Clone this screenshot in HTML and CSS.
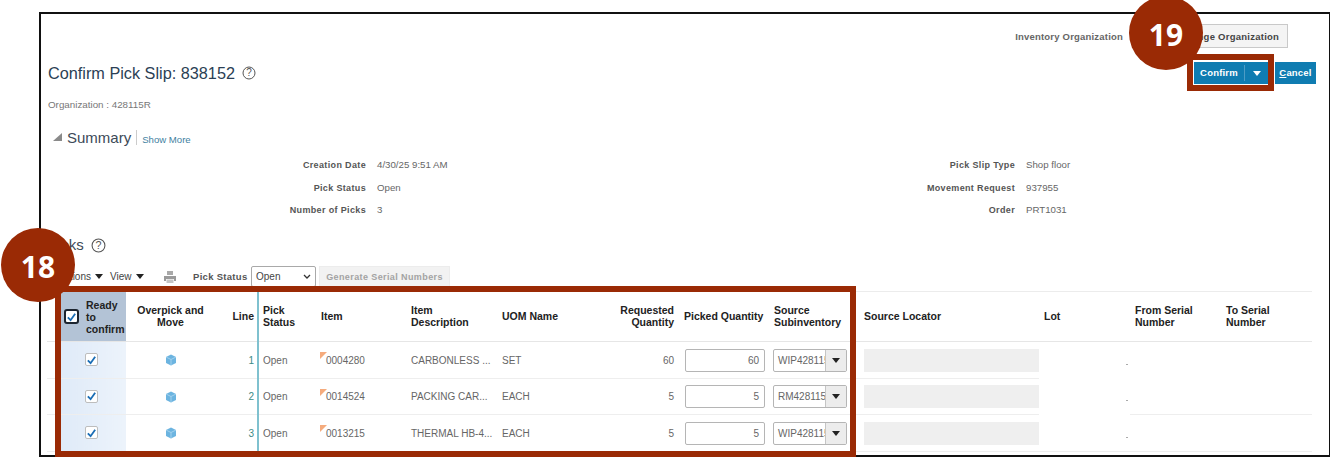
FILE: index.html
```html
<!DOCTYPE html>
<html lang="en">
<head>
<meta charset="utf-8">
<title>Confirm Pick Slip</title>
<link rel="stylesheet" href="styles.css">
</head>
<body>
<main class="frame">
  <div class="org-bar">
    <span class="org-label">Inventory Organization</span>
    <button class="btn-plain">Change Organization</button>
  </div>
  <div class="title-row">
    <h1 class="page-title">Confirm Pick Slip: 838152
      <svg class="help" viewBox="0 0 14 14" width="14" height="14"><circle cx="7" cy="7" r="6" fill="none" stroke="#555" stroke-width="1"/><text x="7" y="10.2" text-anchor="middle" class="help-q">?</text></svg>
    </h1>
    <div class="actions">
      <div class="btn-split"><span class="btn-main">Confirm</span><span class="btn-caret"></span></div>
      <div class="btn-cancel"><u>C</u>ancel</div>
    </div>
  </div>
  <div class="org-line">Organization : 428115R</div>
  <div class="summary-head">
    <span class="disclosure"></span>
    <h2 class="section-title">Summary</h2>
    <a class="show-more">Show More</a>
  </div>
  <div class="form">
    <div class="form-col form-left">
      <div class="form-row"><span class="lbl">Creation Date</span><span class="val">4/30/25 9:51 AM</span></div>
      <div class="form-row"><span class="lbl">Pick Status</span><span class="val">Open</span></div>
      <div class="form-row"><span class="lbl">Number of Picks</span><span class="val">3</span></div>
    </div>
    <div class="form-col form-right">
      <div class="form-row"><span class="lbl">Pick Slip Type</span><span class="val">Shop floor</span></div>
      <div class="form-row"><span class="lbl">Movement Request</span><span class="val">937955</span></div>
      <div class="form-row"><span class="lbl">Order</span><span class="val">PRT1031</span></div>
    </div>
  </div>
  <h2 class="section-title picks-title">Picks
    <svg class="help" viewBox="0 0 14 14" width="15" height="15"><circle cx="7" cy="7" r="6" fill="none" stroke="#555" stroke-width="1"/><text x="7" y="10.2" text-anchor="middle" class="help-q">?</text></svg>
  </h2>
  <div class="toolbar">
    <span class="menu">Actions <i class="tri"></i></span>
    <span class="menu menu-view">View <i class="tri"></i></span>
    <svg class="print" viewBox="0 0 14 14" width="14" height="14"><path d="M4 1h6v4H4z" fill="#a9a9a9"/><path d="M1 6h12v5h-2V9H3v2H1z" fill="#9a9a9a"/><path d="M3.500 9.500h7V13h-7z" fill="#c4c4c4"/></svg>
    <span class="filter-label">Pick Status</span>
    <span class="filter-select">Open<svg viewBox="0 0 8 5" width="8" height="5"><path d="M1 1l3 3 3-3" fill="none" stroke="#333" stroke-width="1.300"/></svg></span>
    <span class="btn-disabled">Generate Serial Numbers</span>
  </div>
  <table class="grid">
    <colgroup>
      <col class="c-sp"><col class="c-ready"><col class="c-over"><col class="c-line"><col class="c-status"><col class="c-item"><col class="c-desc"><col class="c-uom"><col class="c-req"><col class="c-pick"><col class="c-sub"><col class="c-loc"><col class="c-lot"><col class="c-from"><col class="c-to">
    </colgroup>
    <thead>
      <tr>
        <th></th>
        <th class="th-ready"><span class="ready-wrap"><span class="chk chk-head"><svg viewBox="0 0 12 12" width="12" height="12"><path d="M2 6.500l3 3 5-7" fill="none" stroke="#1a6db5" stroke-width="2"/></svg></span><span>Ready to confirm</span></span></th>
        <th class="ctr">Overpick and Move</th>
        <th class="rt line-cell">Line</th>
        <th class="status-cell">Pick Status</th>
        <th>Item</th>
        <th class="th-narrow">Item Description</th>
        <th>UOM Name</th>
        <th class="rt">Requested Quantity</th>
        <th class="th-pick">Picked Quantity</th>
        <th>Source Subinventory</th>
        <th>Source Locator</th>
        <th>Lot</th>
        <th class="th-narrow">From Serial Number</th>
        <th class="th-narrow">To Serial Number</th>
      </tr>
    </thead>
    <tbody>
      <tr>
        <td></td>
        <td class="td-ready"><span class="chk"><svg viewBox="0 0 12 12" width="12" height="12"><path d="M2 6.500l3 3 5-7" fill="none" stroke="#1a6db5" stroke-width="2"/></svg></span></td>
        <td class="ctr"><svg class="cube" viewBox="0 0 12 12" width="12" height="12"><path d="M6 .5l5 2.500v6L6 11.500 1 9V3z" fill="#6cb4e0"/><path d="M1 3l5 2.500L11 3M6 5.500v6" fill="none" stroke="#b9dcf2" stroke-width=".7"/></svg></td>
        <td class="rt line-cell line-num">1</td>
        <td class="status-cell">Open</td>
        <td class="item"><i class="flag"></i>0004280</td>
        <td>CARBONLESS ...</td>
        <td>SET</td>
        <td class="rt">60</td>
        <td><span class="qty">60</span></td>
        <td><span class="combo"><span class="combo-text">WIP428115</span><span class="combo-btn"><i class="tri"></i></span></span></td>
        <td><span class="locator"></span></td>
        <td class="dot-cell no-line"><i class="dot"></i></td>
        <td class="no-line"></td>
        <td class="no-line"></td>
      </tr>
      <tr>
        <td></td>
        <td class="td-ready"><span class="chk"><svg viewBox="0 0 12 12" width="12" height="12"><path d="M2 6.500l3 3 5-7" fill="none" stroke="#1a6db5" stroke-width="2"/></svg></span></td>
        <td class="ctr"><svg class="cube" viewBox="0 0 12 12" width="12" height="12"><path d="M6 .5l5 2.500v6L6 11.500 1 9V3z" fill="#6cb4e0"/><path d="M1 3l5 2.500L11 3M6 5.500v6" fill="none" stroke="#b9dcf2" stroke-width=".7"/></svg></td>
        <td class="rt line-cell line-num">2</td>
        <td class="status-cell">Open</td>
        <td class="item"><i class="flag"></i>0014524</td>
        <td>PACKING CAR...</td>
        <td>EACH</td>
        <td class="rt">5</td>
        <td><span class="qty">5</span></td>
        <td><span class="combo"><span class="combo-text">RM428115</span><span class="combo-btn"><i class="tri"></i></span></span></td>
        <td><span class="locator"></span></td>
        <td class="dot-cell no-line"><i class="dot"></i></td>
        <td></td>
        <td></td>
      </tr>
      <tr>
        <td></td>
        <td class="td-ready"><span class="chk"><svg viewBox="0 0 12 12" width="12" height="12"><path d="M2 6.500l3 3 5-7" fill="none" stroke="#1a6db5" stroke-width="2"/></svg></span></td>
        <td class="ctr"><svg class="cube" viewBox="0 0 12 12" width="12" height="12"><path d="M6 .5l5 2.500v6L6 11.500 1 9V3z" fill="#6cb4e0"/><path d="M1 3l5 2.500L11 3M6 5.500v6" fill="none" stroke="#b9dcf2" stroke-width=".7"/></svg></td>
        <td class="rt line-cell line-num">3</td>
        <td class="status-cell">Open</td>
        <td class="item"><i class="flag"></i>0013215</td>
        <td>THERMAL HB-4...</td>
        <td>EACH</td>
        <td class="rt">5</td>
        <td><span class="qty">5</span></td>
        <td><span class="combo"><span class="combo-text">WIP428115</span><span class="combo-btn"><i class="tri"></i></span></span></td>
        <td><span class="locator"></span></td>
        <td class="dot-cell"><i class="dot"></i></td>
        <td></td>
        <td></td>
      </tr>
    </tbody>
  </table>
</main>
<div class="mark mark-table"></div>
<div class="mark mark-confirm"></div>
<div class="badge badge-18">18</div>
<div class="badge badge-19">19</div>
</body>
</html>
```

FILE: styles.css
```css
* { box-sizing: border-box; }
html, body { margin: 0; padding: 0; height: 457px; overflow: hidden; background: #fff; }
body { position: relative; font-family: "Liberation Sans", Arial, sans-serif; color: #555; font-size: 10px; }

.frame {
  margin: 12px 0 0 39px;
  width: 1291px;
  height: 445px;
  border: 2px solid #111;
  border-right-width: 1px;
  background: #fff;
  overflow: hidden;
}

.org-bar {
  display: flex;
  justify-content: flex-end;
  align-items: center;
  height: 24px;
  margin-top: 10px;
  padding-right: 41px;
}
.org-label { font-weight: bold; font-size: 9.5px; letter-spacing: .2px; color: #666; margin-right: 47px; }
.btn-plain {
  width: 118px;
  height: 24px;
  padding: 0;
  border: 1px solid #c9c9c9;
  background: #f4f4f4;
  font: bold 9.5px "Liberation Sans", Arial, sans-serif;
  letter-spacing: .25px;
  color: #444;
}

.title-row {
  display: flex;
  justify-content: space-between;
  align-items: flex-start;
  height: 37px;
  margin-top: 14px;
  padding: 0 13px 0 7px;
}
.page-title { margin: 1px 0 0; font-weight: normal; font-size: 16.25px; line-height: 20px; color: #2b3f55; display: flex; align-items: center; }
.help { margin-left: 7px; flex: none; }
.help-q { font: 10px "Liberation Sans", Arial, sans-serif; fill: #555; }
.actions { display: flex; gap: 7px; }
.btn-split { display: flex; width: 74px; height: 22px; background: #0f7cb1; color: #fff; font-weight: bold; font-size: 9.5px; letter-spacing: .2px; align-items: center; }
.btn-main { flex: 1; text-align: center; border-right: 1px solid #4d9cc5; line-height: 16px; }
.btn-caret { width: 23px; display: flex; justify-content: center; }
.btn-caret::before { content: ""; border-left: 4px solid transparent; border-right: 4px solid transparent; border-top: 5px solid #fff; }
.btn-cancel { width: 41px; height: 22px; background: #0f7cb1; color: #fff; font-weight: bold; font-size: 9.5px; letter-spacing: .2px; line-height: 22px; text-align: center; }

.org-line { margin: 0 0 0 7px; height: 12px; line-height: 12px; font-size: 9.8px; color: #777; }

.summary-head { display: flex; align-items: center; height: 22px; margin-top: 15px; padding-left: 12px; }
.disclosure { width: 0; height: 0; border-left: 9px solid transparent; border-bottom: 8px solid #8a8a8a; margin-right: 5px; }
.section-title { margin: 0; font-weight: normal; font-size: 15px; color: #3d4a58; }
.show-more { margin-left: 5px; padding-left: 5px; border-left: 1px solid #ccc; font-size: 9.6px; line-height: 15px; color: #3f7f9f; height: 15px; padding-top: 2px; }

.form { display: flex; margin-top: 10px; height: 68px; }
.form-col { display: flex; flex-direction: column; justify-content: flex-start; }
.form-left { width: 649px; }
.form-row { display: flex; height: 23px; line-height: 14px; align-items: flex-start; }
.form-row .lbl { font-weight: bold; font-size: 9px; letter-spacing: .35px; color: #555; text-align: right; }
.form-left .lbl { width: 325px; }
.form-right .lbl { width: 325px; }
.form-row .val { margin-left: 11px; font-size: 9.7px; color: #666; }

.picks-title { margin: 10px 0 0 7px; display: flex; align-items: center; line-height: 18px; height: 18px; }

.toolbar { display: flex; align-items: center; height: 21px; margin-top: 12px; padding-left: 7px; }
.menu { font-size: 10px; color: #444; display: inline-flex; align-items: center; width: 62px; justify-content: flex-end; padding-right: 7px; }
.menu-view { width: 43px; padding-right: 0; justify-content: flex-start; }
.tri { display: inline-block; width: 0; height: 0; border-left: 4px solid transparent; border-right: 4px solid transparent; border-top: 5px solid #222; margin-left: 4px; }
.print { margin-left: 10px; }
.filter-label { margin-left: 16px; font-weight: bold; font-size: 9.5px; letter-spacing: .3px; color: #555; width: 58px; }
.filter-select { display: flex; justify-content: space-between; align-items: center; width: 65px; height: 21px; border: 1px solid #a9a9a9; border-radius: 2px; padding: 0 4px; font-size: 10px; color: #444; }
.btn-disabled { margin-left: 3px; width: 131px; height: 21px; line-height: 20px; text-align: center; background: #f2f2f2; border: 1px solid #ececec; font-weight: bold; font-size: 9px; letter-spacing: .4px; color: #a3a3a3; }

.grid { table-layout: fixed; border-collapse: collapse; width: 1265px; margin: 4px 0 0 6px; border-top: 1px solid #ececec; }
.c-sp { width: 14px; } .c-ready { width: 65px; } .c-over { width: 90px; } .c-line { width: 42px; } .c-status { width: 58px; }
.c-item { width: 90px; } .c-desc { width: 91px; } .c-uom { width: 93px; } .c-req { width: 89px; } .c-pick { width: 90px; }
.c-sub { width: 90px; } .c-loc { width: 180px; } .c-lot { width: 91px; } .c-from { width: 91px; } .c-to { width: 91px; }
.grid th { height: 50px; padding: 0 5px 2px; font-size: 10.5px; line-height: 12px; font-weight: bold; color: #222; text-align: left; border-bottom: 1px solid #e6e6e6; }
.grid td { height: 36.5px; padding: 1px 5px 0; font-size: 10px; color: #666; white-space: nowrap; border-bottom: 1px solid #eee; overflow: hidden; }
.grid td.no-line { border-bottom-color: transparent; }
.grid th:first-child, .grid td:first-child { padding: 0; }
.grid .ctr { text-align: center; padding-right: 6px; }
.grid .rt { text-align: right; }
.grid .line-cell { padding-right: 3px; }
.grid .status-cell { padding-left: 4px; }
.grid th.th-narrow { padding-right: 20px; }
.grid th.th-pick { padding: 0 0 2px 5px; white-space: nowrap; }
.th-ready { background: #b3c3d6; padding: 0 0 0 3px !important; }
.ready-wrap { display: flex; align-items: center; gap: 7px; }
.td-ready { background: linear-gradient(90deg, #dfeaf8, #ecf3fb); text-align: center; padding: 0 5px 0 0 !important; }
.line-num { color: #3c8a86 !important; }
.line-cell { border-right: 2px solid #7fc1cf; }

.chk { display: inline-flex; align-items: center; justify-content: center; width: 13px; height: 13px; background: #fff; border: 1px solid #bdbdbd; border-radius: 2px; vertical-align: middle; }
.chk-head { width: 15px; height: 15px; flex: none; border: 2px solid #1c2530; border-radius: 3px; }
.cube { vertical-align: middle; }
.grid .item { position: relative; padding-left: 10px; }
.flag { position: absolute; left: 4px; top: 10px; width: 0; height: 0; border-top: 7px solid #f5ab7d; border-right: 7px solid transparent; }
.qty { display: block; width: 80px; height: 23px; margin-left: 1px; line-height: 22px; text-align: right; padding-right: 5px; border: 1px solid #b5b5b5; border-radius: 2px; background: #fff; color: #666; }
.combo { display: flex; width: 74px; height: 23px; margin-left: -1px; border: 1px solid #b5b5b5; border-radius: 2px; overflow: hidden; color: #666; }
.combo-text { width: 51px; padding-left: 4px; line-height: 21px; overflow: hidden; white-space: nowrap; }
.combo-btn { flex: 1; background: #ececec; border-left: 1px solid #c5c5c5; display: flex; align-items: center; justify-content: center; }
.combo-btn .tri { margin: 0; }
.locator { display: block; width: 175px; height: 23px; background: #efefef; }
.dot-cell { padding-left: 0 !important; }
.dot-cell .dot { display: block; margin-left: 87px; margin-top: 8px; width: 2px; height: 1px; background: #aaa; }

.mark { position: absolute; border: 6px solid #9a2a05; }
.mark-table { left: 55px; top: 286px; width: 801px; height: 171px; }
.mark-confirm { left: 1187px; top: 54px; width: 87px; height: 37px; }
.badge {
  position: absolute;
  width: 74px;
  height: 74px;
  border-radius: 50%;
  background: #9a2a05;
  color: #fff;
  font: bold 30px/77px "Open Sans", sans-serif;
  text-align: center;
}
.badge-18 { left: 1px; top: 228px; }
.badge-19 { left: 1129px; top: -4px; }
```
